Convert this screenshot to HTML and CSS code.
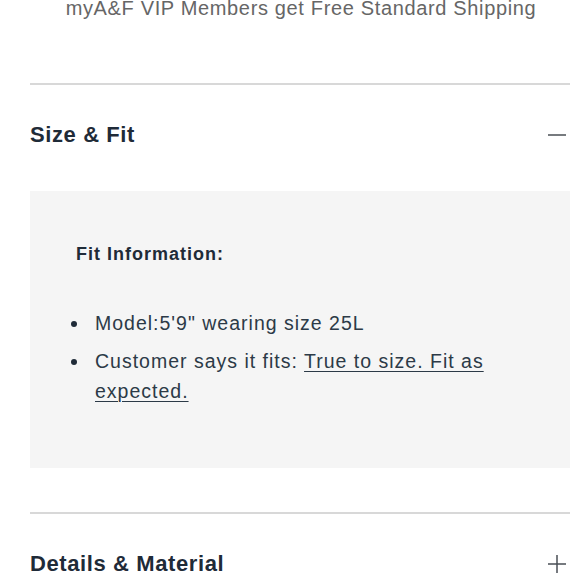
FILE: index.html
```html
<!DOCTYPE html>
<html lang="en">
<head>
<meta charset="utf-8">
<title>Size &amp; Fit</title>
<link rel="stylesheet" href="styles.css">
</head>
<body>
  <p class="promo">myA&amp;F VIP Members get Free Standard Shipping</p>
  <div class="accordion">
    <section class="acc-item">
      <div class="acc-header">
        <h2 class="acc-title">Size &amp; Fit</h2>
        <svg class="acc-icon" viewBox="0 0 18 18" width="18" height="18" aria-hidden="true"><path d="M0 9H18" stroke="#4a4f55" stroke-width="1.5" fill="none"/></svg>
      </div>
      <div class="acc-panel">
        <h3 class="fit-heading">Fit Information:</h3>
        <ul class="fit-list">
          <li class="fit-item"><span class="dot"></span><span>Model:5'9" wearing size 25L</span></li>
          <li class="fit-item"><span class="dot"></span><span>Customer says it fits: <a class="fit-link" href="#">True to size. Fit as expected.</a></span></li>
        </ul>
      </div>
    </section>
    <section class="acc-item">
      <div class="acc-header">
        <h2 class="acc-title">Details &amp; Material</h2>
        <svg class="acc-icon" viewBox="0 0 18 18" width="18" height="18" aria-hidden="true"><path d="M0 9H18M9 0V18" stroke="#4a4f55" stroke-width="1.5" fill="none"/></svg>
      </div>
    </section>
  </div>
</body>
</html>
```

FILE: styles.css
```css
html, body {
  margin: 0;
  padding: 0;
  background: #ffffff;
}

body {
  font-family: "Liberation Sans", Arial, sans-serif;
  color: #2c3a47;
  width: 580px;
  height: 580px;
  overflow: hidden;
}

.promo {
  margin: -4px 0 0;
  font-size: 20px;
  line-height: 24px;
  letter-spacing: 0.65px;
  color: #666666;
  text-align: center;
  padding-left: 22px;
}

.accordion {
  margin: 63px 10px 0 30px;
}

.acc-item {
  border-top: 2px solid #d8d8d8;
}

.acc-item + .acc-item {
  margin-top: 44px;
}

.acc-header {
  display: flex;
  align-items: center;
  justify-content: space-between;
  padding: 36px 4px 42px 0;
}

.acc-title {
  margin: 0;
  font-size: 22px;
  line-height: 28px;
  font-weight: 700;
  letter-spacing: 0.6px;
  color: #1f2b38;
}

.acc-icon {
  display: block;
  flex: none;
}

.acc-panel {
  background: #f5f5f5;
  padding: 51px 40px 62px 40px;
}

.fit-heading {
  margin: 0 0 42px 6px;
  font-size: 18px;
  line-height: 24px;
  font-weight: 700;
  letter-spacing: 1px;
  color: #1f2b38;
}

.fit-list {
  list-style: none;
  margin: 0;
  padding: 0;
  display: flex;
  flex-direction: column;
  gap: 8px;
}

.fit-item {
  display: grid;
  grid-template-columns: 25px 1fr;
  align-items: start;
  font-size: 19.5px;
  line-height: 30px;
  letter-spacing: 1px;
  color: #2c3a47;
  padding-right: 20px;
}

.dot {
  width: 6px;
  height: 6px;
  border-radius: 50%;
  background: #1f2b38;
  margin: 13px 0 0 1px;
}

.fit-link {
  color: #2c3a47;
  text-decoration: underline;
  text-underline-offset: 3px;
  text-decoration-thickness: 1px;
}
```
